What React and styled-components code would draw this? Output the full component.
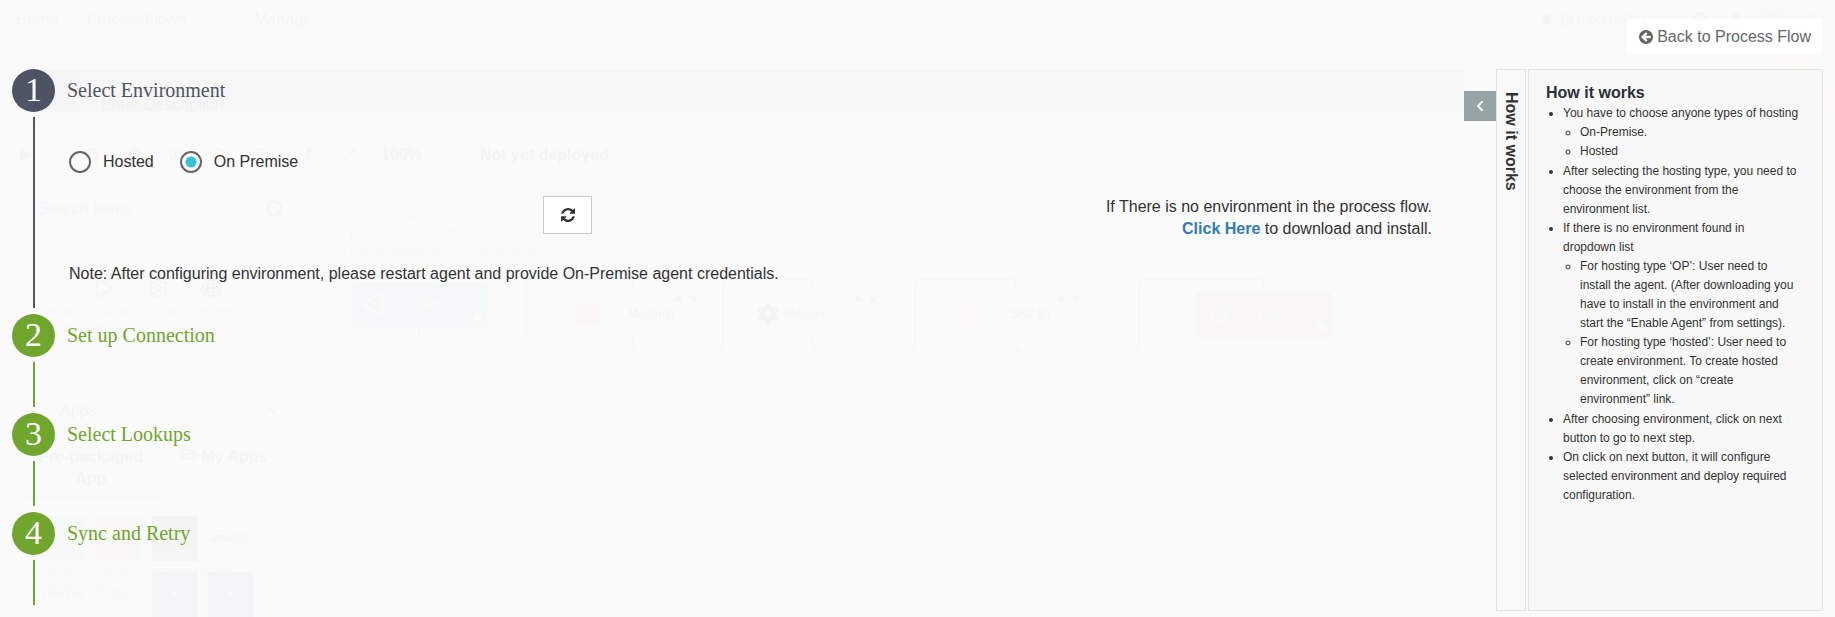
import React, { useState } from "react";
import styled, { createGlobalStyle } from "styled-components";
import {
  FaBell,
  FaBookmark,
  FaCaretRight,
  FaChevronLeft,
  FaCog,
  FaPlay,
  FaQuestionCircle,
  FaRegFolderOpen,
  FaRegTrashAlt,
  FaPowerOff,
} from "react-icons/fa";
import {
  ChevronDown,
  ChevronUp,
  Copy,
  Globe,
  Maximize2,
  Play,
  RefreshCcw,
  Save,
  Search,
  Settings,
  ZoomIn,
  ZoomOut,
} from "lucide-react";

const GlobalStyle = createGlobalStyle`
  *, *::before, *::after { box-sizing: border-box; }
  body {
    margin: 0;
    background: #fafafa;
    color: #333;
    font-family: "Liberation Sans", Arial, sans-serif;
    font-size: 16px;
    line-height: 22px;
  }
  button, input { font: inherit; color: inherit; }
`;

const Page = styled.div`
  position: relative;
  min-height: 100vh;
  overflow: hidden;
`;

/* ---------- process designer lying under the wizard ---------- */

const Backdrop = styled.div`
  position: absolute;
  inset: 0;
  display: flex;
  flex-direction: column;
  overflow: hidden;
  background: #e8e8e8;
  color: #888;
`;

const TopBar = styled.header`
  display: flex;
  align-items: center;
  justify-content: space-between;
  flex: none;
  height: 48px;
  padding: 0 12px 8px 16px;
  background: #fff;
  color: #999;
`;

const NavGroup = styled.div`
  display: flex;
  align-items: center;
  gap: ${(p) => p.$gap}px;
`;

const Bookmarks = styled.span`
  display: flex;
  align-items: center;
  gap: 8px;
  margin-right: 8px;
  font-size: 14px;
`;

const IconTile = styled.span`
  display: grid;
  place-items: center;
  width: 30px;
  height: 30px;
  background: ${(p) => p.$tone || "#eee"};
`;

const TitleRow = styled.div`
  display: flex;
  flex: none;
  align-items: flex-end;
  gap: 20px;
  height: 79px;
  margin: 8px 6px 0;
  padding: 5px;
  background: #fff;
`;

const TitleTile = styled.div`
  display: grid;
  place-items: center;
  width: 70px;
  height: 68px;
  background: #e4e4e4;
`;

const Description = styled.span`
  padding-bottom: 14px;
`;

const Tools = styled.div`
  display: flex;
  flex: none;
  height: 40px;
  margin: 0 6px;
  background: #fff;
  border: solid #ddd;
  border-width: 1px 0;
  font-weight: bold;
`;

const Tool = styled.span`
  display: flex;
  align-items: center;
  justify-content: center;
  gap: 14px;
  width: ${(p) => p.$w}px;
  border-right: 1px solid #ddd;
`;

const Deployed = styled.span`
  padding: 8px 14px;
`;

const Workspace = styled.div`
  display: flex;
  flex: 1;
  min-height: 0;
  padding: 0 6px;
  gap: 26px;
`;

const Palette = styled.aside`
  position: relative;
  display: flex;
  flex-direction: column;
  flex: none;
  width: 303px;
  padding: 12px 12px 0;
  background: #fff;
`;

const Watermark = styled.div`
  position: absolute;
  top: ${(p) => p.$top}px;
  left: 32px;
  color: #bbb;
  font-size: 12px;
  line-height: 17px;
`;

const SearchBox = styled.label`
  display: flex;
  align-items: center;
  height: 44px;
  padding: 0 12px 0 20px;
  background: #eee;
`;

const SearchInput = styled.input`
  flex: 1;
  min-width: 0;
  padding: 0;
  border: 0;
  background: none;
  &::placeholder { color: #aaa; }
`;

const ShapeRow = styled.div`
  display: flex;
  gap: 32px;
  padding: 30px 75px 90px;
  margin-top: 14px;
  border-top: 3px solid #eee;
`;

const AppsHeader = styled.div`
  display: flex;
  align-items: center;
  justify-content: space-between;
  height: 43px;
  margin: 0 6px;
  padding: 0 12px 0 35px;
  border: 1px solid #ddd;
`;

const AppTabs = styled.div`
  display: flex;
  height: 68px;
  margin: 0 6px;
  padding-top: 14px;
  font-weight: bold;
  text-align: center;
`;

const AppTab = styled.span`
  flex: 1;
  padding: 0 12px;
  border-bottom: 4px solid ${(p) => (p.$active ? "#9cc9dc" : "#fff")};
`;

const AppGrid = styled.div`
  display: grid;
  grid-template-columns: repeat(4, 45px);
  grid-auto-rows: 45px;
  gap: 11px;
  padding: 17px 22px 0;
`;

const AppTile = styled.span`
  display: grid;
  place-items: center;
  overflow: hidden;
  background: ${(p) => p.$tone};
  color: ${(p) => p.$ink || "#fff"};
  font-size: 12px;
  line-height: 12px;
`;

const Canvas = styled.div`
  flex: 1;
  min-width: 0;
  background: #fbfbfb;
  margin-top: 22px;
`;

const FlowDrawing = styled.svg`
  display: block;
  width: 100%;
  height: 300px;
  font-family: "Liberation Sans", Arial, sans-serif;
  font-size: 12px;
`;

const Ribbon = styled.svg`
  position: absolute;
  top: 57px;
  right: 0;
`;

/* ---------- wizard ---------- */

const Wizard = styled.div`
  position: relative;
  display: flex;
  flex-direction: column;
  min-height: 100vh;
  padding: 19px 12px 6px;
  background: rgba(250, 250, 250, 0.95);
`;

const BackButton = styled.button`
  display: flex;
  align-items: center;
  align-self: flex-end;
  gap: 4px;
  height: 36px;
  margin-bottom: 14px;
  padding: 0 12px;
  border: 0;
  background: #fff;
  color: #666;
  cursor: pointer;
`;

const Columns = styled.div`
  display: flex;
  flex: 1;
`;

const Steps = styled.main`
  flex: 1;
  min-width: 0;
`;

const Step = styled.section`
  display: flex;
  color: ${(p) => (p.$active ? "#4f5564" : "#70a52e")};
`;

const Rail = styled.div`
  display: flex;
  flex-direction: column;
  align-items: center;
  flex: none;
  width: 43px;
  padding-bottom: 6px;
  &::after {
    content: "";
    flex: 1;
    width: 2px;
    min-height: 45px;
    margin-top: 5px;
    background: currentColor;
  }
`;

const StepNumber = styled.span`
  width: 43px;
  height: 43px;
  border-radius: 50%;
  background: ${(p) => (p.$active ? "#4f5564" : "#70a52e")};
  color: #fff;
  font: 34px/41px "Liberation Serif", "Times New Roman", serif;
  text-align: center;
`;

const StepMain = styled.div`
  flex: 1;
  min-width: 0;
`;

const StepTitle = styled.h2`
  margin: 0 0 0 -22px;
  padding-left: 34px;
  background: ${(p) => (p.$active ? "rgba(0, 0, 0, 0.016)" : "none")};
  font: 20px/43px "Liberation Serif", "Times New Roman", serif;
`;

const StepBody = styled.div`
  display: flex;
  flex-direction: column;
  gap: 23px;
  padding: 39px 32px 29px 14px;
  color: #333;
`;

const Choices = styled.div`
  display: flex;
  gap: 26px;
`;

const Choice = styled.label`
  display: flex;
  align-items: center;
  gap: 12px;
  cursor: pointer;
`;

const Radio = styled.input`
  appearance: none;
  width: 22px;
  height: 22px;
  margin: 0;
  border: 2px solid #666;
  border-radius: 50%;
  &:checked {
    background: radial-gradient(circle, #35c3d3 5px, transparent 6px);
  }
`;

const EnvironmentRow = styled.div`
  display: grid;
  grid-template-columns: 8fr 15fr;
`;

const EnvironmentTools = styled.div`
  display: flex;
  grid-column: 2;
  align-items: flex-start;
  justify-content: space-between;
`;

const RefreshButton = styled.button`
  display: grid;
  place-items: center;
  width: 49px;
  height: 38px;
  padding: 0;
  border: 1px solid #ccc;
  background: #fff;
  cursor: pointer;
`;

const Hint = styled.p`
  margin: 0;
  text-align: right;
`;

const StrongLink = styled.a`
  color: #337ab7;
  font-weight: bold;
  text-decoration: none;
`;

const Note = styled.p`
  margin: 0;
`;

const Toggle = styled.button`
  display: grid;
  place-items: center;
  flex: none;
  width: 32px;
  height: 30px;
  margin-top: 22px;
  padding: 0;
  border: 0;
  background: #95a5a5;
  color: #fff;
  cursor: pointer;
`;

const SideTab = styled.div`
  flex: none;
  width: 30px;
  margin-right: 2px;
  padding: 22px 3px;
  border: 1px solid #e4e4e4;
  background: #f9f9f9;
  font-weight: bold;
  writing-mode: vertical-rl;
`;

const HelpPanel = styled.aside`
  flex: none;
  width: 295px;
  padding: 11px 23px 11px 17px;
  border: 1px solid #e4e4e4;
  background: #f8f8f8;
`;

const HelpTitle = styled.h3`
  margin: 0;
  color: #2c3038;
  font-size: 16px;
  line-height: 23px;
`;

const HelpList = styled.ul`
  margin: 0;
  padding-left: 17px;
  font-size: 12px;
  line-height: 19px;
  & & { padding-bottom: 1px; }
`;

const RefreshIcon = () => (
  <svg width="14" height="14" viewBox="0 0 1536 1536" fill="currentColor" aria-hidden="true">
    <path d="M1511 928q0 5-1 7-64 268-268 434.5t-478 166.5q-146 0-282.5-55t-243.5-157l-129 129q-19 19-45 19t-45-19-19-45v-448q0-26 19-45t45-19h448q26 0 45 19t19 45-19 45l-137 137q71 66 161 102t187 36q134 0 250-65t186-179q11-17 53-117 8-23 30-23h192q13 0 22.5 9.5t9.5 22.5zm25-800v448q0 26-19 45t-45 19h-448q-26 0-45-19t-19-45 19-45l138-138q-148-137-349-137-134 0-250 65t-186 179q-11 17-53 117-8 23-30 23h-199q-13 0-22.5-9.5t-9.5-22.5v-7q65-268 270-434.5t480-166.5q146 0 284 55.5t245 156.5l130-129q19-19 45-19t45 19 19 45z" />
  </svg>
);

const BackIcon = () => (
  <svg width="14" height="14" viewBox="0 0 1536 1536" fill="currentColor" aria-hidden="true">
    <path d="M1280 832v-128q0-26-19-45t-45-19h-502l189-189q19-19 19-45t-19-45l-91-91q-18-18-45-18t-45 18l-362 362-91 91q-18 18-18 45t18 45l91 91 362 362q18 18 45 18t45-18l91-91q18-18 18-45t-18-45l-189-189h502q26 0 45-19t19-45zm256-64q0 209-103 385.5t-279.5 279.5-385.5 103-385.5-103-279.5-279.5-103-385.5 103-385.5 279.5-279.5 385.5-103 385.5 103 279.5 279.5 103 385.5z" />
  </svg>
);

const watermark = [
  "GoJS 1.7 evaluation",
  "(c) 1998-2017 Northwoods Software",
  "Not for distribution or production use",
  "nwoods.com",
];

const flowNodes = [
  { x: 17, y: 85, label: "Start", fill: "#8fcbd6", ink: "#fff" },
  { x: 231, y: 95, label: "Magento", fill: "#fff", tile: "#f3c3a6" },
  { x: 410, y: 95, label: "Mapper", fill: "#fff", gear: true },
  { x: 613, y: 95, label: "SAP B1", fill: "#fff", tile: "#eedc9c" },
  { x: 861, y: 95, label: "End", fill: "#e8b9b4", ink: "#fff" },
];

const flowLinks = [
  "M84 130v8q0 5 5 5h97q5 0 5-5v-51q0-5 5-5h97q5 0 5 5v8",
  "M298 140v9q0 6 6 6h79q5 0 5-6v-62q0-5 5-5h80q5 0 5 5v8",
  "M478 140v9q0 6 6 6h91q5 0 5-6v-62q0-5 5-5h91q5 0 5 5v8",
  "M681 140v9q0 6 6 6h112q5 0 5-6v-62q0-5 5-5h115q5 0 5 5v8",
];

function Flow() {
  return (
    <FlowDrawing>
      <g fill="#bbb">
        {watermark.map((line, i) => (
          <text key={line} x="15" y={24 + i * 17}>{line}</text>
        ))}
      </g>
      <g fill="none" stroke="#bbb" strokeWidth="2">
        {flowLinks.map((d) => (
          <path key={d} d={d} />
        ))}
      </g>
      {flowNodes.map((n) => (
        <g key={n.label}>
          <rect x={n.x} y={n.y} width="135" height="45" fill={n.fill} stroke="#ccc" />
          {n.tile && <rect x={n.x + 11} y={n.y + 12} width="22" height="22" fill={n.tile} />}
          {n.gear && <FaCog x={n.x + 12} y={n.y + 11} size={22} color="#888" />}
          {!n.ink && <circle cx={n.x + 113} cy={n.y + 7} r="3" fill="#e08888" />}
          {!n.ink && (
            <path d={`M${n.x + 125} ${n.y + 4}l6 6m0-6l-6 6`} stroke="#e08888" strokeWidth="2" />
          )}
          {n.label === "Start" && (
            <path
              d={`M${n.x + 12} ${n.y + 22}l18-12v24zl8 8`}
              fill="none"
              stroke="#fff"
              strokeWidth="2"
            />
          )}
          {n.label === "End" && (
            <path
              d={`M${n.x + 12} ${n.y + 22}h20m-10-10v20m8-10a8 8 0 1 1-16 0a8 8 0 1 1 16 0`}
              fill="none"
              stroke="#fff"
              strokeWidth="2"
            />
          )}
          <circle cx={n.x + 125} cy={n.y + 35} r="4" fill={n.ink || "#e4e4e4"} />
          <text x={n.x + (n.gear ? 40 : 62)} y={n.y + 26} fill={n.ink || "#888"}>
            {n.label}
          </text>
        </g>
      ))}
    </FlowDrawing>
  );
}

function Designer() {
  return (
    <Backdrop inert aria-hidden="true">
      <TopBar>
        <NavGroup $gap={28}>
          <span>Home</span>
          <span>ProcessFlows</span>
          <ChevronDown size={12} />
          <span>Manage</span>
        </NavGroup>
        <NavGroup $gap={6}>
          <Bookmarks>
            <FaBookmark size={12} />
            BOOKMARKS
            <ChevronDown size={12} />
          </Bookmarks>
          <IconTile><FaQuestionCircle /></IconTile>
          <IconTile><FaBell /></IconTile>
          <IconTile $tone="#cdeade"><FaPowerOff /></IconTile>
          <IconTile><Maximize2 size={14} /></IconTile>
        </NavGroup>
      </TopBar>
      <TitleRow>
        <TitleTile><Save /></TitleTile>
        <Description>Enter Description</Description>
      </TitleRow>
      <Tools>
        <Tool $w={64}><FaPlay size={12} /><ChevronDown size={12} /></Tool>
        <Tool $w={45}><RefreshCcw size={16} /></Tool>
        <Tool $w={40}><FaRegTrashAlt size={14} /></Tool>
        <Tool $w={43}><ZoomIn size={16} /></Tool>
        <Tool $w={43}><ZoomOut size={16} /></Tool>
        <Tool $w={45}><Copy size={14} /></Tool>
        <Tool $w={45}><i>f</i></Tool>
        <Tool $w={37}><Maximize2 size={14} /></Tool>
        <Tool $w={68}>100%</Tool>
        <Tool $w={30}><ChevronDown size={12} /></Tool>
        <Deployed>Not yet deployed</Deployed>
      </Tools>
      <Workspace>
        <Palette>
          <SearchBox>
            <SearchInput placeholder="Search Items" aria-label="Search Items" />
            <Search size={20} />
          </SearchBox>
          <ShapeRow>
            <Play size={22} />
            <Settings size={22} />
            <Globe size={22} />
          </ShapeRow>
          <AppsHeader>
            Apps
            <ChevronUp size={16} />
          </AppsHeader>
          <AppTabs>
            <AppTab $active>Pre-packaged App</AppTab>
            <AppTab><FaRegFolderOpen /> My Apps</AppTab>
          </AppTabs>
          <AppGrid>
            <AppTile $tone="#bfe3cb" />
            <AppTile $tone="#f6cdb8" />
            <AppTile $tone="#8a8a8a" />
            <AppTile $tone="#fff" $ink="#888">amazon</AppTile>
            <AppTile $tone="#fff" $ink="#999">channel</AppTile>
            <AppTile $tone="#fff" $ink="#d99">dpd</AppTile>
            <AppTile $tone="#8b98ad"><FaCaretRight /></AppTile>
            <AppTile $tone="#8b98ad"><FaCaretRight /></AppTile>
          </AppGrid>
          {[94, 354].map((top) => (
            <Watermark key={top} $top={top}>
              {watermark.map((line) => (
                <div key={line}>{line}</div>
              ))}
            </Watermark>
          ))}
        </Palette>
        <Canvas>
          <Flow />
        </Canvas>
      </Workspace>
      <Ribbon width="65" height="64" viewBox="0 0 65 64">
        <path d="M0 0h32l33 28v36z" fill="#eedfae" />
      </Ribbon>
    </Backdrop>
  );
}

function WizardStep({ number, title, active, children }) {
  return (
    <Step $active={active}>
      <Rail>
        <StepNumber $active={active}>{number}</StepNumber>
      </Rail>
      <StepMain>
        <StepTitle $active={active}>{title}</StepTitle>
        {children}
      </StepMain>
    </Step>
  );
}

export default function App() {
  const [hosting, setHosting] = useState("On Premise");

  return (
    <Page>
      <GlobalStyle />
      <Designer />
      <Wizard>
        <BackButton type="button">
          <BackIcon />
          Back to Process Flow
        </BackButton>
        <Columns>
          <Steps>
            <WizardStep number={1} title="Select Environment" active>
              <StepBody>
                <Choices role="radiogroup" aria-label="Hosting type">
                  {["Hosted", "On Premise"].map((name) => (
                    <Choice key={name}>
                      <Radio
                        type="radio"
                        name="hosting"
                        checked={hosting === name}
                        onChange={() => setHosting(name)}
                      />
                      {name}
                    </Choice>
                  ))}
                </Choices>
                <EnvironmentRow>
                  <EnvironmentTools>
                    <RefreshButton type="button" aria-label="Refresh environments">
                      <RefreshIcon />
                    </RefreshButton>
                    <Hint>
                      If There is no environment in the process flow.
                      <br />
                      <StrongLink href="#download">Click Here</StrongLink> to download and install.
                    </Hint>
                  </EnvironmentTools>
                </EnvironmentRow>
                <Note>
                  Note: After configuring environment, please restart agent and provide On-Premise
                  agent credentials.
                </Note>
              </StepBody>
            </WizardStep>
            <WizardStep number={2} title="Set up Connection" />
            <WizardStep number={3} title="Select Lookups" />
            <WizardStep number={4} title="Sync and Retry" />
          </Steps>
          <Toggle type="button" aria-label="Collapse help">
            <FaChevronLeft size={12} />
          </Toggle>
          <SideTab>How it works</SideTab>
          <HelpPanel>
            <HelpTitle>How it works</HelpTitle>
            <HelpList>
              <li>
                You have to choose anyone types of hosting
                <HelpList>
                  <li>On-Premise.</li>
                  <li>Hosted</li>
                </HelpList>
              </li>
              <li>
                After selecting the hosting type, you need to choose the environment from the
                environment list.
              </li>
              <li>
                If there is no environment found in dropdown list
                <HelpList>
                  <li>
                    For hosting type ‘OP’: User need to install the agent. (After downloading you
                    have to install in the environment and start the “Enable Agent” from settings).
                  </li>
                  <li>
                    For hosting type ‘hosted’: User need to create environment. To create hosted
                    environment, click on “create environment” link.
                  </li>
                </HelpList>
              </li>
              <li>After choosing environment, click on next button to go to next step.</li>
              <li>
                On click on next button, it will configure selected environment and deploy required
                configuration.
              </li>
            </HelpList>
          </HelpPanel>
        </Columns>
      </Wizard>
    </Page>
  );
}
